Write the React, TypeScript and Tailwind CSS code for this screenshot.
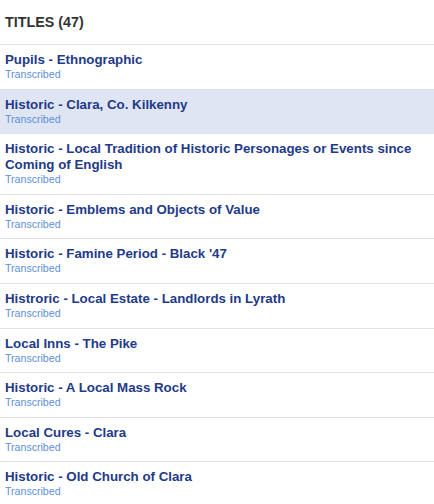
const TITLES = [
  'Pupils - Ethnographic',
  'Historic - Clara, Co. Kilkenny',
  'Historic - Local Tradition of Historic Personages or Events since Coming of English',
  'Historic - Emblems and Objects of Value',
  "Historic - Famine Period - Black '47",
  'Histroric - Local Estate - Landlords in Lyrath',
  'Local Inns - The Pike',
  'Historic - A Local Mass Rock',
  'Local Cures - Clara',
  'Historic - Old Church of Clara',
]

export default function App() {
  return (
    <div className="w-[434px] h-[504px] overflow-hidden bg-white" style={{ fontFamily: '"Liberation Sans", Arial, sans-serif' }}>
      <div className="h-[45px] flex items-center px-[5px] pt-px border-b border-[#dde1e8]">
        <h2 className="text-[14.3px] font-semibold text-[#333333]">TITLES (47)</h2>
      </div>
      <ul>
        {TITLES.map((title, i) => (
          <li
            key={i}
            className={`px-[5px] pt-[7px] pb-[8px] border-b border-[#dde1e8] ${i === 1 ? 'bg-[#dfe5f3]' : ''}`}
          >
            <p className="text-[13.3px] leading-[16px] font-semibold text-[#223a88] pr-4">{title}</p>
            <p className="text-[10.6px] leading-[12.6px] text-[#5d8fd8]">Transcribed</p>
          </li>
        ))}
      </ul>
    </div>
  )
}
